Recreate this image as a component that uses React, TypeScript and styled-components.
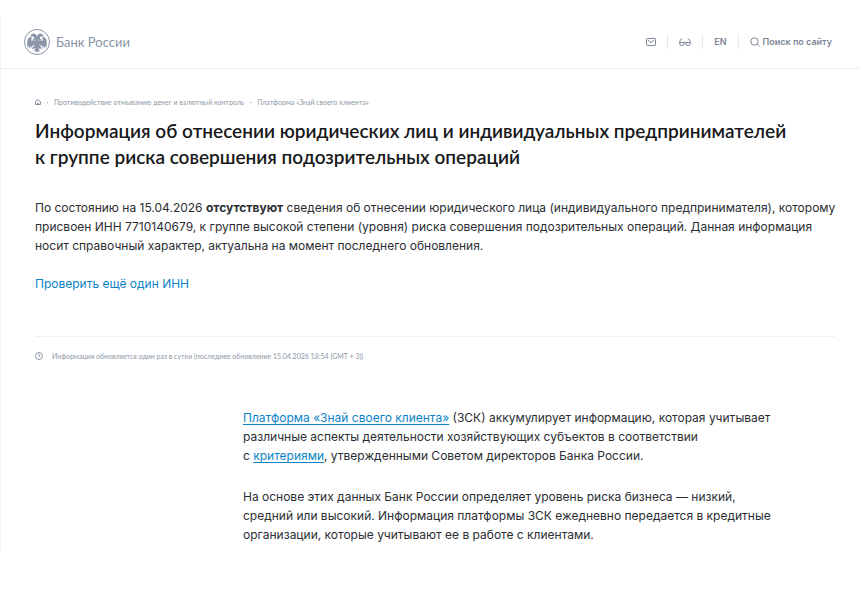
import React from "react";
import styled, { createGlobalStyle } from "styled-components";

const GlobalStyle = createGlobalStyle`
  *, *::before, *::after { box-sizing: border-box; }
  body {
    margin: 0;
    background: #fff;
    color: #2b2e33;
    font: 400 12px/19px Inter, "Noto Sans", sans-serif;
  }
  h1, p, ol { margin: 0; padding: 0; }
  svg { display: block; flex: none; }
`;

const Page = styled.div`
  margin: 15px 0 40px;
  padding-bottom: 7px;
  border-left: 1px solid #f3f4f5;
`;

const Header = styled.header`
  display: flex;
  align-items: center;
  justify-content: space-between;
  height: 54px;
  padding: 0 28px 0 22px;
  border-bottom: 1px solid #eff0f2;
`;

const Brand = styled.a`
  display: flex;
  align-items: center;
  gap: 5px;
  color: #8a94a6;
  font: 400 13px/20px Lato, sans-serif;
  text-decoration: none;
`;

const Tools = styled.nav`
  display: flex;
  align-items: center;
`;

const Tool = styled.button`
  display: flex;
  align-items: center;
  gap: 3px;
  height: 15px;
  padding: 0 11px;
  border: 0;
  border-left: 1px solid #e6e8eb;
  background: none;
  color: #7d8697;
  font: 600 9px/15px Inter, "Noto Sans", sans-serif;
  white-space: nowrap;
  cursor: pointer;
  &:first-child { padding-left: 0; border-left: 0; }
  &:last-child { padding-right: 0; }
`;

const Main = styled.main`
  padding: 28px 25px 0 34px;
`;

const Breadcrumbs = styled.ol`
  display: flex;
  align-items: center;
  height: 10px;
  list-style: none;
  color: #8d99a6;
  font: 400 7px/10px Lato, sans-serif;
  li { display: flex; align-items: center; }
  li + li::before {
    content: "·";
    width: 13px;
    text-align: center;
  }
  a { color: inherit; text-decoration: none; }
`;

const Title = styled.h1`
  margin-top: 11px;
  color: #17181a;
  font: 600 19px/26px Lato, sans-serif;
`;

const Result = styled.section`
  padding: 28px 0 43px;
  border-bottom: 1px solid #eff0f2;
`;

const Statement = styled.p`
  margin-right: -16px;
`;

const Link = styled.a<{ $underlined?: boolean }>`
  color: #0a84c6;
  text-decoration: ${(p) => (p.$underlined ? "underline" : "none")};
  text-underline-offset: 2px;
`;

const NextCheck = styled.p`
  padding-top: 19px;
`;

const Updated = styled.p`
  display: flex;
  align-items: center;
  gap: 9px;
  padding-top: 14px;
  color: #8d99a6;
  font: 400 7px/10px Lato, sans-serif;
`;

const About = styled.section`
  display: grid;
  gap: 22px;
  margin: 47px 0 0 26%;
`;

const Emblem = () => (
  <svg width="28" height="28" viewBox="0 0 56 56" fill="none" aria-hidden="true">
    <circle cx="28" cy="28" r="25" stroke="#8a94a6" strokeWidth="2" />
    <g fill="#8a94a6">
      <path d="M28 17c-1-4-4-6-7-6-3 0-5 2-5 4l-3 1 4 1 4 0c2 1 2 3 0 5l-3 3c4 1 7-1 8-3v9h4v-9c1 2 4 4 8 3l-3-3c-2-2-2-4 0-5l4 0 4-1-3-1c0-2-2-4-5-4-3 0-6 2-7 6z" />
      <path d="M18 19c-5-2-9 1-9 6-1 5-1 10 1 15l2-5 1 7 3-7 1 5 3-7 1 3 4-6V20l-4 6-5-1z" />
      <path d="M38 19c5-2 9 1 9 6 1 5 1 10-1 15l-2-5-1 7-3-7-1 5-3-7-1 3-4-6V20l4 6 5-1z" />
      <path d="M28 24c-4 2-6 6-5 11l-5 5 1 3 3-3 2 3 1-4 1 1-4 7 3-1 3 3 3-3 3 1-4-7 1-1 1 4 2-3 3 3 1-3-5-5c1-5-1-9-5-11z" />
    </g>
  </svg>
);

const MailIcon = () => (
  <svg width="10" height="8" viewBox="0 0 10 8" fill="none" stroke="currentColor">
    <rect x=".5" y=".5" width="9" height="7" rx=".7" />
    <path d="M2 2.2 5 4.6l3-2.4" />
  </svg>
);

const GlassesIcon = () => (
  <svg width="12" height="8" viewBox="0 0 12 8" fill="none" stroke="currentColor">
    <path d="M.6 4.6h4.6v.7a2.3 2.3 0 0 1-4.6 0zM6.8 4.6h4.6v.7a2.3 2.3 0 0 1-4.6 0zM5 4.6c.5-.7 1.5-.7 2 0M.7 4.6C.7 2.6 1.6 1 3.2.7M11.3 4.6c0-2-.9-3.6-2.5-3.9" />
  </svg>
);

const SearchIcon = () => (
  <svg width="10" height="10" viewBox="0 0 10 10" fill="none" stroke="currentColor">
    <circle cx="4.5" cy="4.5" r="3.7" />
    <path d="m7.2 7.2 2.3 2.3" />
  </svg>
);

const HomeIcon = () => (
  <svg width="6" height="6" viewBox="0 0 12 12" fill="none" stroke="#6f798a" strokeWidth="1.7">
    <path d="M1.2 5 6 1l4.8 4v6H1.2zM4.2 8.5h3.6" />
  </svg>
);

const ClockIcon = () => (
  <svg width="8" height="8" viewBox="0 0 16 16" fill="none" stroke="#7d8697" strokeWidth="1.7">
    <circle cx="8" cy="8" r="7" />
    <path d="M8 3.5V8l3 1.8" />
  </svg>
);

export default function App() {
  return (
    <>
      <GlobalStyle />
      <Page>
        <Header>
          <Brand href="#">
            <Emblem />
            Банк России
          </Brand>
          <Tools>
            <Tool aria-label="Почта"><MailIcon /></Tool>
            <Tool aria-label="Версия для слабовидящих"><GlassesIcon /></Tool>
            <Tool>EN</Tool>
            <Tool><SearchIcon />Поиск по сайту</Tool>
          </Tools>
        </Header>
        <Main>
          <Breadcrumbs>
            <li><a href="#" aria-label="Главная"><HomeIcon /></a></li>
            <li><a href="#">Противодействие отмыванию денег и валютный контроль</a></li>
            <li><a href="#">Платформа «Знай своего клиента»</a></li>
          </Breadcrumbs>
          <Title>
            Информация об отнесении юридических лиц и индивидуальных предпринимателей
            <br />к группе риска совершения подозрительных операций
          </Title>
          <Result>
            <Statement>
              По состоянию на 15.04.2026 <b>отсутствуют</b> сведения об отнесении юридического лица
              (индивидуального предпринимателя), которому
              <br />
              присвоен ИНН 7710140679, к группе высокой степени (уровня) риска совершения
              подозрительных операций. Данная информация
              <br />
              носит справочный характер, актуальна на момент последнего обновления.
            </Statement>
            <NextCheck><Link href="#">Проверить ещё один ИНН</Link></NextCheck>
          </Result>
          <Updated>
            <ClockIcon />
            Информация обновляется один раз в сутки (последнее обновление 15.04.2026 18:54 (GMT + 3))
          </Updated>
          <About>
            <p>
              <Link href="#" $underlined>Платформа «Знай своего клиента»</Link> (ЗСК) аккумулирует
              информацию, которая учитывает
              <br />
              различные аспекты деятельности хозяйствующих субъектов в соответствии
              <br />с <Link href="#" $underlined>критериями</Link>, утвержденными Советом директоров
              Банка России.
            </p>
            <p>
              На основе этих данных Банк России определяет уровень риска бизнеса — низкий,
              <br />
              средний или высокий. Информация платформы ЗСК ежедневно передается в кредитные
              <br />
              организации, которые учитывают ее в работе с клиентами.
            </p>
          </About>
        </Main>
      </Page>
    </>
  );
}
